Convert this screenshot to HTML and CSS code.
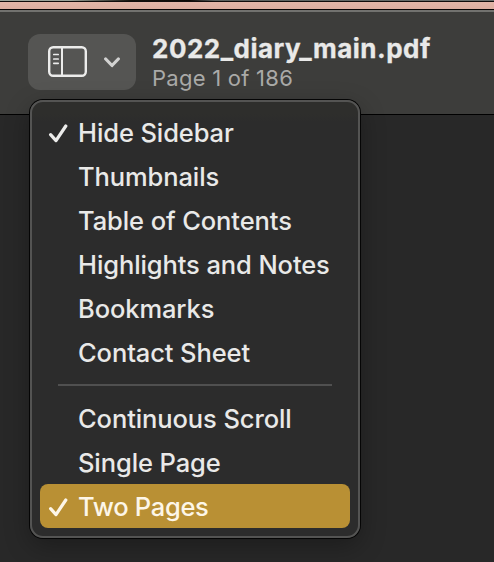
FILE: index.html
```html
<!DOCTYPE html>
<html lang="en">

<head>
    <meta charset="UTF-8">
    <meta name="viewport" content="width=device-width, initial-scale=1.0">
    <title>2022_diary_main.pdf</title>
    <link rel="stylesheet" href="styles.css">
</head>

<body>
    <div class="desktop"></div>
    <div class="window">
        <header class="toolbar">
            <div class="view-button">
                <svg class="sidebar-icon" width="40" height="32" viewBox="0 0 40 32">
                    <rect x="1.2" y="1.2" width="36.6" height="28.6" rx="4" />
                    <path class="divider" d="M14 1v29" />
                    <path class="lines" d="M5.8 8.5h4.4M5.8 13h4.4M5.8 17.3h4.4" />
                </svg>
                <svg class="chevron" width="16" height="11" viewBox="0 0 16 11">
                    <path d="M1.7 2l6.3 6.5L14.3 2" />
                </svg>
                <ul class="menu">
                    <li class="checked">
                        <svg class="check" width="20" height="20" viewBox="0 0 20 20"><path d="M2.6 11.6l5.4 6L17.8 3" /></svg>
                        <span>Hide Sidebar</span>
                    </li>
                    <li>Thumbnails</li>
                    <li>Table of Contents</li>
                    <li>Highlights and Notes</li>
                    <li>Bookmarks</li>
                    <li>Contact Sheet</li>
                    <li class="line"></li>
                    <li>Continuous Scroll</li>
                    <li>Single Page</li>
                    <li class="checked current">
                        <svg class="check" width="20" height="20" viewBox="0 0 20 20"><path d="M2.6 11.6l5.4 6L17.8 3" /></svg>
                        <span>Two Pages</span>
                    </li>
                </ul>
            </div>
            <div class="title">
                <h1>2022_diary_main.pdf</h1>
                <p>Page 1 of 186</p>
            </div>
        </header>
    </div>
</body>

</html>
```

FILE: styles.css
```css
* {
    margin: 0;
    padding: 0;
    box-sizing: border-box;
}

body {
    height: 562px;
    overflow: hidden;
    display: flex;
    flex-direction: column;
    background-color: #282828;
    font-family: Inter, "Liberation Sans", sans-serif;
    color: #e9e9e8;
}

/* strip of wallpaper above the window */
.desktop {
    height: 9px;
    background: linear-gradient(transparent 1px, #100c0b 1px, #100c0b 2px, #e2b6a8 2px, #dcaea0 100%),
        linear-gradient(to right, #9aa39a 70px, #15120d 130px, #0b0906 190px, #5a605e 215px, #6a706e);
}

.window {
    flex: 1;
    border-top: 1px solid #080606;
    background-color: #282828;
}

.toolbar {
    height: 105px;
    border-top: 2px solid #72726f;
    border-bottom: 1px solid #000;
    padding: 22px 0 0 28px;
    display: flex;
    align-items: flex-start;
    background-color: #3d3d3b;
}

.view-button {
    position: relative;
    width: 108px;
    height: 56px;
    border-radius: 12px;
    background-color: #555553;
    display: flex;
    align-items: center;
    padding-left: 20px;
    gap: 16px;
}

svg {
    flex: none;
    fill: none;
    stroke: #ececeb;
    stroke-width: 2.4;
    stroke-linecap: round;
    stroke-linejoin: round;
}

.sidebar-icon .divider {
    stroke-width: 2;
}

.sidebar-icon .lines {
    stroke-width: 1.7;
}

.chevron {
    stroke: #d2d2d1;
    stroke-width: 3.2;
}

.title {
    padding-left: 16px;
    white-space: nowrap;
}

.title h1 {
    font-size: 26px;
    line-height: 30px;
    letter-spacing: 0.5px;
    -webkit-text-stroke: 0.3px;
}

.title p {
    font-size: 22px;
    line-height: 28px;
    letter-spacing: 0.25px;
    color: #aaaaa8;
}

.menu {
    position: absolute;
    left: 2px;
    top: 66px;
    width: 330px;
    height: 438px;
    padding: 8px;
    border: 2px solid #545453;
    border-radius: 13px;
    background: linear-gradient(#2e2e2c 12px, #2c2c2c 20px);
    box-shadow: 0 0 0 1px #050505, 0 8px 26px rgba(0, 0, 0, 0.3);
    list-style: none;
}

.menu li {
    height: 44px;
    padding-left: 38px;
    line-height: 46px;
    font-size: 25.5px;
    font-weight: 500;
    letter-spacing: -0.1px;
    white-space: nowrap;
    border-radius: 8px;
}

.menu .checked {
    display: flex;
    align-items: center;
    padding: 2px 0 0 8px;
    gap: 10px;
}

.menu .current {
    background-color: #b99034;
    color: #fdf6e8;
    letter-spacing: -0.3px;
}

.current .check {
    stroke: #fdf6e8;
}

.check {
    stroke-width: 3.2;
}

.menu .line {
    height: 2px;
    margin: 10px 18px;
    border-radius: 0;
    background-color: #505050;
}
```
